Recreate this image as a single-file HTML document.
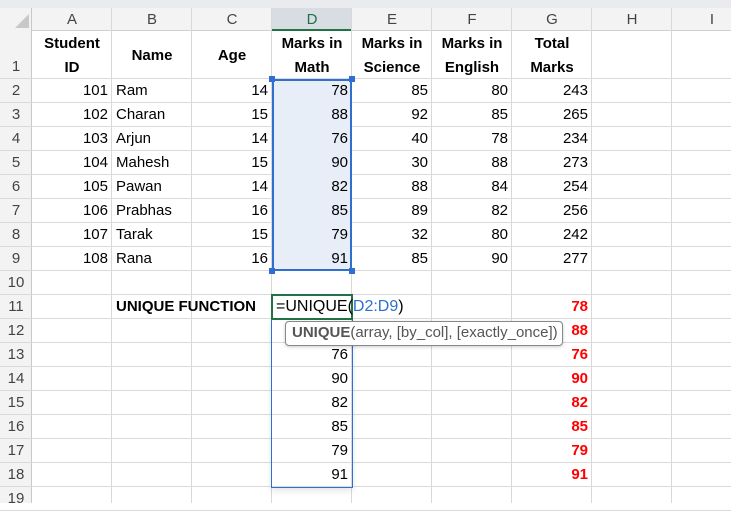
<!DOCTYPE html>
<html><head><style>
body{margin:0;width:731px;height:503px;overflow:hidden;background:#fff;font-family:"Liberation Sans",Arial,sans-serif;position:relative}
.a{position:absolute;box-sizing:border-box}
.t{position:absolute;font-size:15px;color:#000;white-space:nowrap;line-height:24px}
.r{text-align:right}
.b{font-weight:bold}
.hd{position:absolute;color:#444;font-size:15px;text-align:center;line-height:23px}
.red{color:#f00;font-weight:bold}
</style></head><body>
<div class="a" style="left:0;top:0;width:731px;height:8px;background:#e9ebee"></div>
<div class="a" style="left:0;top:8px;width:731px;height:23px;background:#f3f3f3;border-bottom:1px solid #d0d0d0"></div>
<div class="a" style="left:0;top:8px;width:32px;height:495px;background:#f3f3f3;border-right:1px solid #c8c8c8"></div>
<svg class="a" style="left:14px;top:13px" width="16" height="16"><polygon points="15,1 15,15 1,15" fill="#c8c8c8"/></svg>
<div class="a" style="left:272px;top:8px;width:80px;height:23px;background:#d8dde3;border-bottom:2px solid #217346"></div>
<div id="g"></div>
<script>
var cols=[32,112,192,272,352,432,512,592,672,752],L="ABCDEFGHI",h='';
for(var i=0;i<9;i++){h+='<div class="hd" style="left:'+cols[i]+'px;top:8px;width:80px;'+(i==3?'color:#217346':'')+'">'+L[i]+'</div>';
h+='<div class="a" style="left:'+(cols[i+1]-1)+'px;top:8px;width:1px;height:495px;background:#d8d8d8"></div>';}
var ys=[31];for(var r=2;r<=21;r++)ys.push(79+(r-2)*24);
for(var r=1;r<=19;r++){var y=ys[r-1],y2=ys[r];
h+='<div class="a" style="left:0;top:'+(y2-1)+'px;width:731px;height:1px;background:#dadada"></div>';
h+='<div class="hd" style="left:0;width:32px;top:'+(r==1?y+24:y)+'px;line-height:24px">'+r+'</div>';}
document.getElementById('g').innerHTML=h;
</script>
<div class="a" style="left:272px;top:79px;width:80px;height:192px;background:#e8eef8;border:2px solid #2f6fd0"></div>
<div class="a" style="left:269px;top:76px;width:6px;height:6px;background:#2f6fd0"></div>
<div class="a" style="left:349px;top:76px;width:6px;height:6px;background:#2f6fd0"></div>
<div class="a" style="left:269px;top:268px;width:6px;height:6px;background:#2f6fd0"></div>
<div class="a" style="left:349px;top:268px;width:6px;height:6px;background:#2f6fd0"></div>
<div id="d"></div>
<script>
var hd=[["Student<br>ID",32],["Name",112],["Age",192],["Marks in<br>Math",272],["Marks in<br>Science",352],["Marks in<br>English",432],["Total<br>Marks",512]],s='';
hd.forEach(function(x){var two=x[0].indexOf('<br>')>0;s+='<div class="t b" style="left:'+x[1]+'px;width:80px;text-align:center;top:'+(two?32:44)+'px">'+x[0]+'</div>';});
var data=[[101,"Ram",14,78,85,80,243],[102,"Charan",15,88,92,85,265],[103,"Arjun",14,76,40,78,234],[104,"Mahesh",15,90,30,88,273],[105,"Pawan",14,82,88,84,254],[106,"Prabhas",16,85,89,82,256],[107,"Tarak",15,79,32,80,242],[108,"Rana",16,91,85,90,277]];
data.forEach(function(d,i){var y=79+i*24;
s+='<div class="t r" style="left:32px;width:76px;top:'+y+'px">'+d[0]+'</div>';
s+='<div class="t" style="left:116px;top:'+y+'px">'+d[1]+'</div>';
[2,3,4,5,6].forEach(function(k){s+='<div class="t r" style="left:'+(192+(k-2)*80)+'px;width:76px;top:'+y+'px">'+d[k]+'</div>';});
});
var u=[78,88,76,90,82,85,79,91];
u.forEach(function(v,i){var y=295+i*24;s+='<div class="t r red" style="left:512px;width:76px;top:'+y+'px">'+v+'</div>';
if(i>=2)s+='<div class="t r" style="left:272px;width:76px;top:'+y+'px">'+v+'</div>';});
document.getElementById('d').innerHTML=s;
</script>
<div class="t b" style="left:116px;top:295px">UNIQUE FUNCTION</div>
<div class="a" style="left:271px;top:317px;width:82px;height:171px;border:1px solid #2f6fd0;border-top:none;background:transparent;box-shadow:0 3px 6px rgba(0,0,0,.1)"></div>
<div class="a" style="left:271px;top:294px;width:82px;height:26px;border:2px solid #217346;background:#fff"></div>
<div class="t" style="left:276px;top:295px;font-size:16px">=UNIQUE(<span style="color:#2f6fd0">D2:D9</span>)</div>
<div class="a" style="left:285px;top:321px;width:278px;height:25px;border:1px solid #888;border-radius:4px;background:#fff;box-shadow:0 1px 3px rgba(0,0,0,.2)"></div>
<div class="t" style="left:292px;top:321px;color:#555;font-size:15px"><b>UNIQUE</b>(array, [by_col], [exactly_once])</div>
</body></html>
